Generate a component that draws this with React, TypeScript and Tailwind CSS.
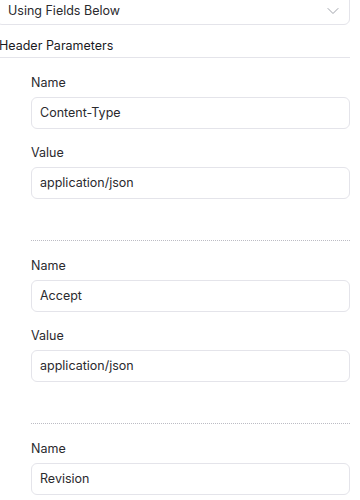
import React from 'react';
import { ChevronDown } from 'lucide-react';

interface Header {
    name: string;
    value?: string;
}

const headers: Header[] = [
    { name: 'Content-Type', value: 'application/json' },
    { name: 'Accept', value: 'application/json' },
    { name: 'Revision' },
];

const Field: React.FC<{ label: string; value: string }> = ({ label, value }) => (
    <div className="flex flex-col">
        <label className="h-5 leading-5 text-[12.5px] text-[#2a2a2e] mb-1">{label}</label>
        <div className="h-[32px] border border-[#e4e4ea] rounded-md bg-white flex items-center pl-[8px] text-[12.5px] text-[#2a2a2e]">
            {value}
        </div>
    </div>
);

const App: React.FC = () => {
    return (
        <div className="bg-white w-[360px] h-[500px] overflow-hidden" style={{ fontFamily: 'Inter, "Noto Sans", sans-serif' }}>
            <div className="w-[354px] -ml-[4px]">
                {/* Select */}
                <div className="h-[32px] -mt-[7px] border border-[#e4e4ea] rounded-md flex items-center justify-between pl-[11px] pr-[6px] pt-[4px]">
                    <span className="text-[12.5px] text-[#2a2a2e]">Using Fields Below</span>
                    <ChevronDown size={20} strokeWidth={1.2} className="text-[#a0a3ab]" />
                </div>

                {/* Section title */}
                <div className="mt-[11px] pb-[1px] border-b border-[#e4e4ea]">
                    <h2 className="h-5 leading-5 text-[12.5px] font-normal text-[#1a1a1e] ml-[3px]">Header Parameters</h2>
                </div>

                {/* Header rows */}
                <div className="pl-[35px]">
                    {headers.map((h, i) => (
                        <div
                            key={h.name}
                            className={`pt-[15px] pb-[41px] flex flex-col gap-[14px] ${i < headers.length - 1 ? 'border-b border-dotted border-[#bcbcc4]' : ''}`}
                        >
                            <Field label="Name" value={h.name} />
                            {h.value && <Field label="Value" value={h.value} />}
                        </div>
                    ))}
                </div>
            </div>
        </div>
    );
};

export default App;
